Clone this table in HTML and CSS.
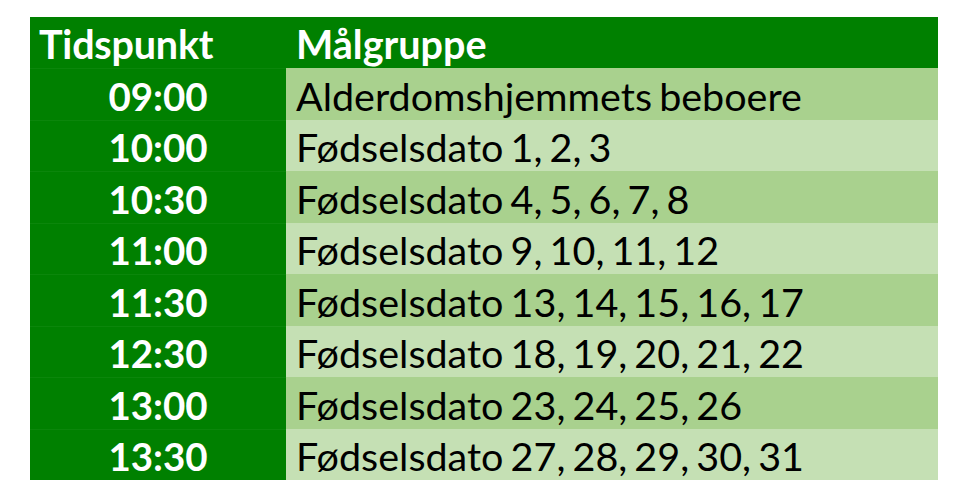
FILE: index.html
```html
<!DOCTYPE html>
<html lang="no">
<head>
<meta charset="utf-8">
<title>Tidspunkt</title>
<link rel="stylesheet" href="styles.css">
</head>
<body>
<div class="schedule">
  <div class="cell head time-head">Tidspunkt</div>
  <div class="cell head">Målgruppe</div>

  <div class="cell time">09:00</div>
  <div class="cell group dark">Alderdomshjemmets beboere</div>

  <div class="cell time">10:00</div>
  <div class="cell group light">Fødselsdato 1, 2, 3</div>

  <div class="cell time">10:30</div>
  <div class="cell group dark">Fødselsdato 4, 5, 6, 7, 8</div>

  <div class="cell time">11:00</div>
  <div class="cell group light">Fødselsdato 9, 10, 11, 12</div>

  <div class="cell time">11:30</div>
  <div class="cell group dark">Fødselsdato 13, 14, 15, 16, 17</div>

  <div class="cell time">12:30</div>
  <div class="cell group light">Fødselsdato 18, 19, 20, 21, 22</div>

  <div class="cell time">13:00</div>
  <div class="cell group dark">Fødselsdato 23, 24, 25, 26</div>

  <div class="cell time last">13:30</div>
  <div class="cell group light">Fødselsdato 27, 28, 29, 30, 31</div>
</div>
</body>
</html>
```

FILE: styles.css
```css
html, body {
  margin: 0;
  padding: 0;
  background: #ffffff;
}

body {
  padding: 17px 0 0 30px;
  font-family: "Lato", "Open Sans", "Liberation Sans", sans-serif;
}

.schedule {
  display: grid;
  grid-template-columns: 256px 652px;
  grid-auto-rows: 51.45px;
  width: 908px;
}

.cell {
  display: flex;
  align-items: center;
  font-size: 39.5px;
  line-height: 1;
  box-sizing: border-box;
  white-space: nowrap;
  padding-top: 3px;
}

.head {
  background: #008000;
  color: #ffffff;
  font-weight: 700;
  padding-left: 10px;
}

.time-head {
  padding-left: 9px;
  letter-spacing: -0.2px;
}

.time {
  background: #008000;
  color: #ffffff;
  font-weight: 700;
  font-size: 38.5px;
  justify-content: center;
  border-top: 1px solid #0b860b;
}

.group {
  color: #000000;
  padding-left: 10px;
  word-spacing: -3px;
}

.dark {
  background: #a9d18e;
}

.light {
  background: #c5e0b4;
}
```
